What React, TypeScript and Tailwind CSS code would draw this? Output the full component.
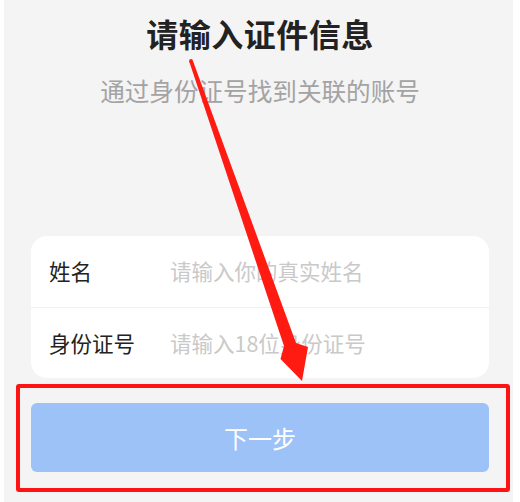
import React from "react";

export default function App() {
  const font = { fontFamily: '"Noto Sans CJK SC", "Noto Sans", sans-serif' };
  return (
    <div
      className="relative w-[520px] h-[502px] overflow-hidden bg-[#f4f4f4]"
      style={font}
    >
      <div className="flex flex-col items-center">
        <h1 className="mt-[14px] text-[32px] leading-[38px] font-bold text-[#222222] tracking-[0.5px]">
          请输入证件信息
        </h1>
        <p className="mt-[22px] text-[24.6px] leading-[32px] text-[#a3a3a3]">
          通过身份证号找到关联的账号
        </p>
      </div>

      <div className="mx-[31px] mt-[130px] bg-white rounded-[16px] flex flex-col">
        <div className="h-[72px] flex items-center border-b border-[#f0f0f0]">
          <span className="w-[139px] pl-[18px] text-[21.5px] text-[#222222]">姓名</span>
          <span className="text-[21.5px] text-[#c9c9c9]">请输入你的真实姓名</span>
        </div>
        <div className="h-[70px] flex items-center">
          <span className="w-[139px] pl-[18px] text-[21.5px] text-[#222222]">身份证号</span>
          <span className="text-[21.5px] text-[#c9c9c9]">请输入18位身份证号</span>
        </div>
      </div>

      <div className="mx-[31px] mt-[25px] h-[69px] rounded-[6px] bg-[#9cc2f8] flex items-center justify-center">
        <span className="text-[24px] text-white">下一步</span>
      </div>

      {/* annotation overlays */}
      <div className="absolute left-[16px] top-[384px] w-[494px] h-[108px] border-[4px] border-[#ff1212] rounded-[3px]" />
      <svg className="absolute left-0 top-0" width="520" height="502" viewBox="0 0 520 502">
        <circle cx="191" cy="61" r="1.9" fill="#ff1a12" />
        <polygon
          points="189.2,61.6 284,346 280.5,359 302,381 308,347 296,343 192.8,60.4"
          fill="#ff1a12"
        />
      </svg>
      <div className="absolute left-0 top-0 w-[4px] h-full bg-white" />
      <div className="absolute right-0 top-0 w-[7px] h-full bg-white" />
    </div>
  );
}
